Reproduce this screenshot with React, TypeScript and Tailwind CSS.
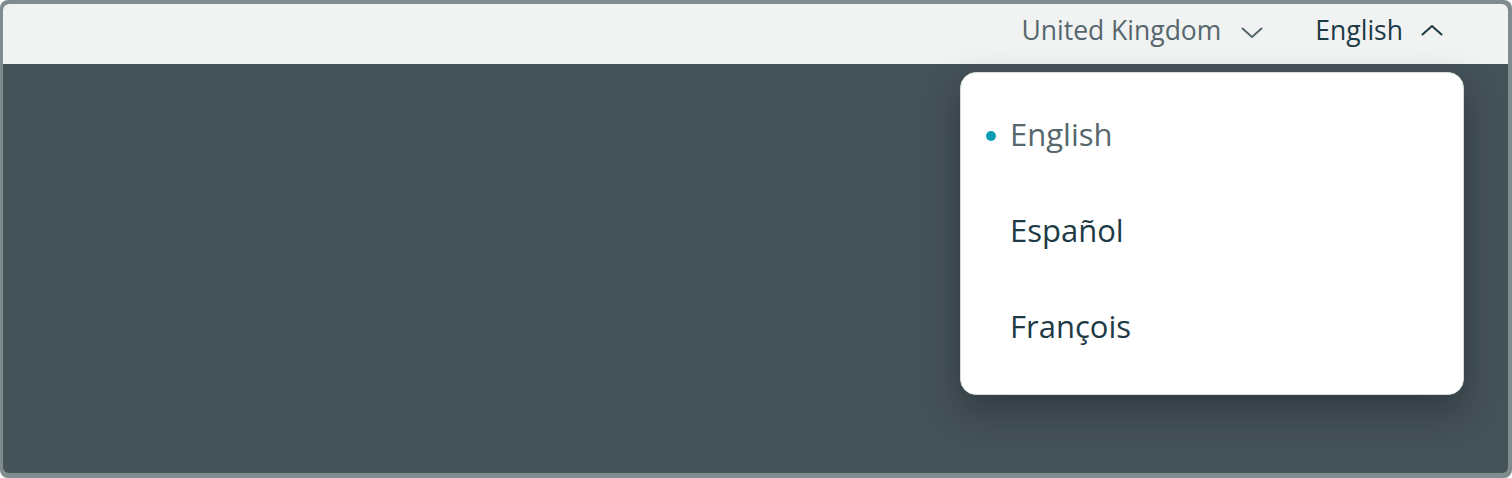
import { useState } from 'react';

const languages = ['English', 'Español', 'François'];

function Chevron({ up = false }: { up?: boolean }) {
  return (
    <svg width="22" height="12" viewBox="0 0 22 12" fill="none" aria-hidden="true">
      <polyline
        points={up ? '1.5,10.5 11,2 20.5,10.5' : '1.5,1.5 11,10 20.5,1.5'}
        stroke="currentColor"
        strokeWidth="2"
        strokeLinecap="round"
        strokeLinejoin="round"
      />
    </svg>
  );
}

export default function App() {
  const [selected, setSelected] = useState('English');

  return (
    <div
      className="h-[478px] w-[1512px] rounded-[8px] bg-[#7f8c8f] pt-[4px] pr-[4px] pb-[5px] pl-[3px]"
      style={{ fontFamily: '"Open Sans", "Noto Sans", sans-serif' }}
    >
      <div className="relative flex h-full flex-col overflow-hidden rounded-[6px] bg-[#455258]">
        <header className="flex h-[60px] shrink-0 items-center justify-end gap-[52px] bg-[#f1f3f2] pr-[65px] pb-[7px] text-[26.5px]">
          <button className="flex items-center gap-[20px] text-[#56676d]">
            <span>United Kingdom</span>
            <span className="mt-[4px]">
              <Chevron />
            </span>
          </button>
          <button className="flex items-center gap-[18px] text-[#1e3a45]">
            <span>English</span>
            <span className="-mt-[2px]">
              <Chevron up />
            </span>
          </button>
        </header>

        <ul className="absolute top-[68px] right-[44px] flex h-[323px] w-[504px] flex-col justify-center gap-[46px] rounded-[16px] border border-[#d6dcdd] bg-white pb-[6px] pl-[49px] text-[31px] shadow-[0_16px_36px_rgba(20,30,36,0.45)]">
          {languages.map((lang) => {
            const active = lang === selected;
            return (
              <li key={lang}>
                <button
                  onClick={() => setSelected(lang)}
                  className={`relative flex h-[50px] items-center leading-none ${active ? 'text-[#56676d]' : 'text-[#1e3a45]'}`}
                >
                  {active && (
                    <span className="absolute top-1/2 -left-[24px] mt-[1px] h-[10px] w-[10px] -translate-y-1/2 rounded-full bg-[#0a9db5]" />
                  )}
                  {lang}
                </button>
              </li>
            );
          })}
        </ul>
      </div>
    </div>
  );
}
